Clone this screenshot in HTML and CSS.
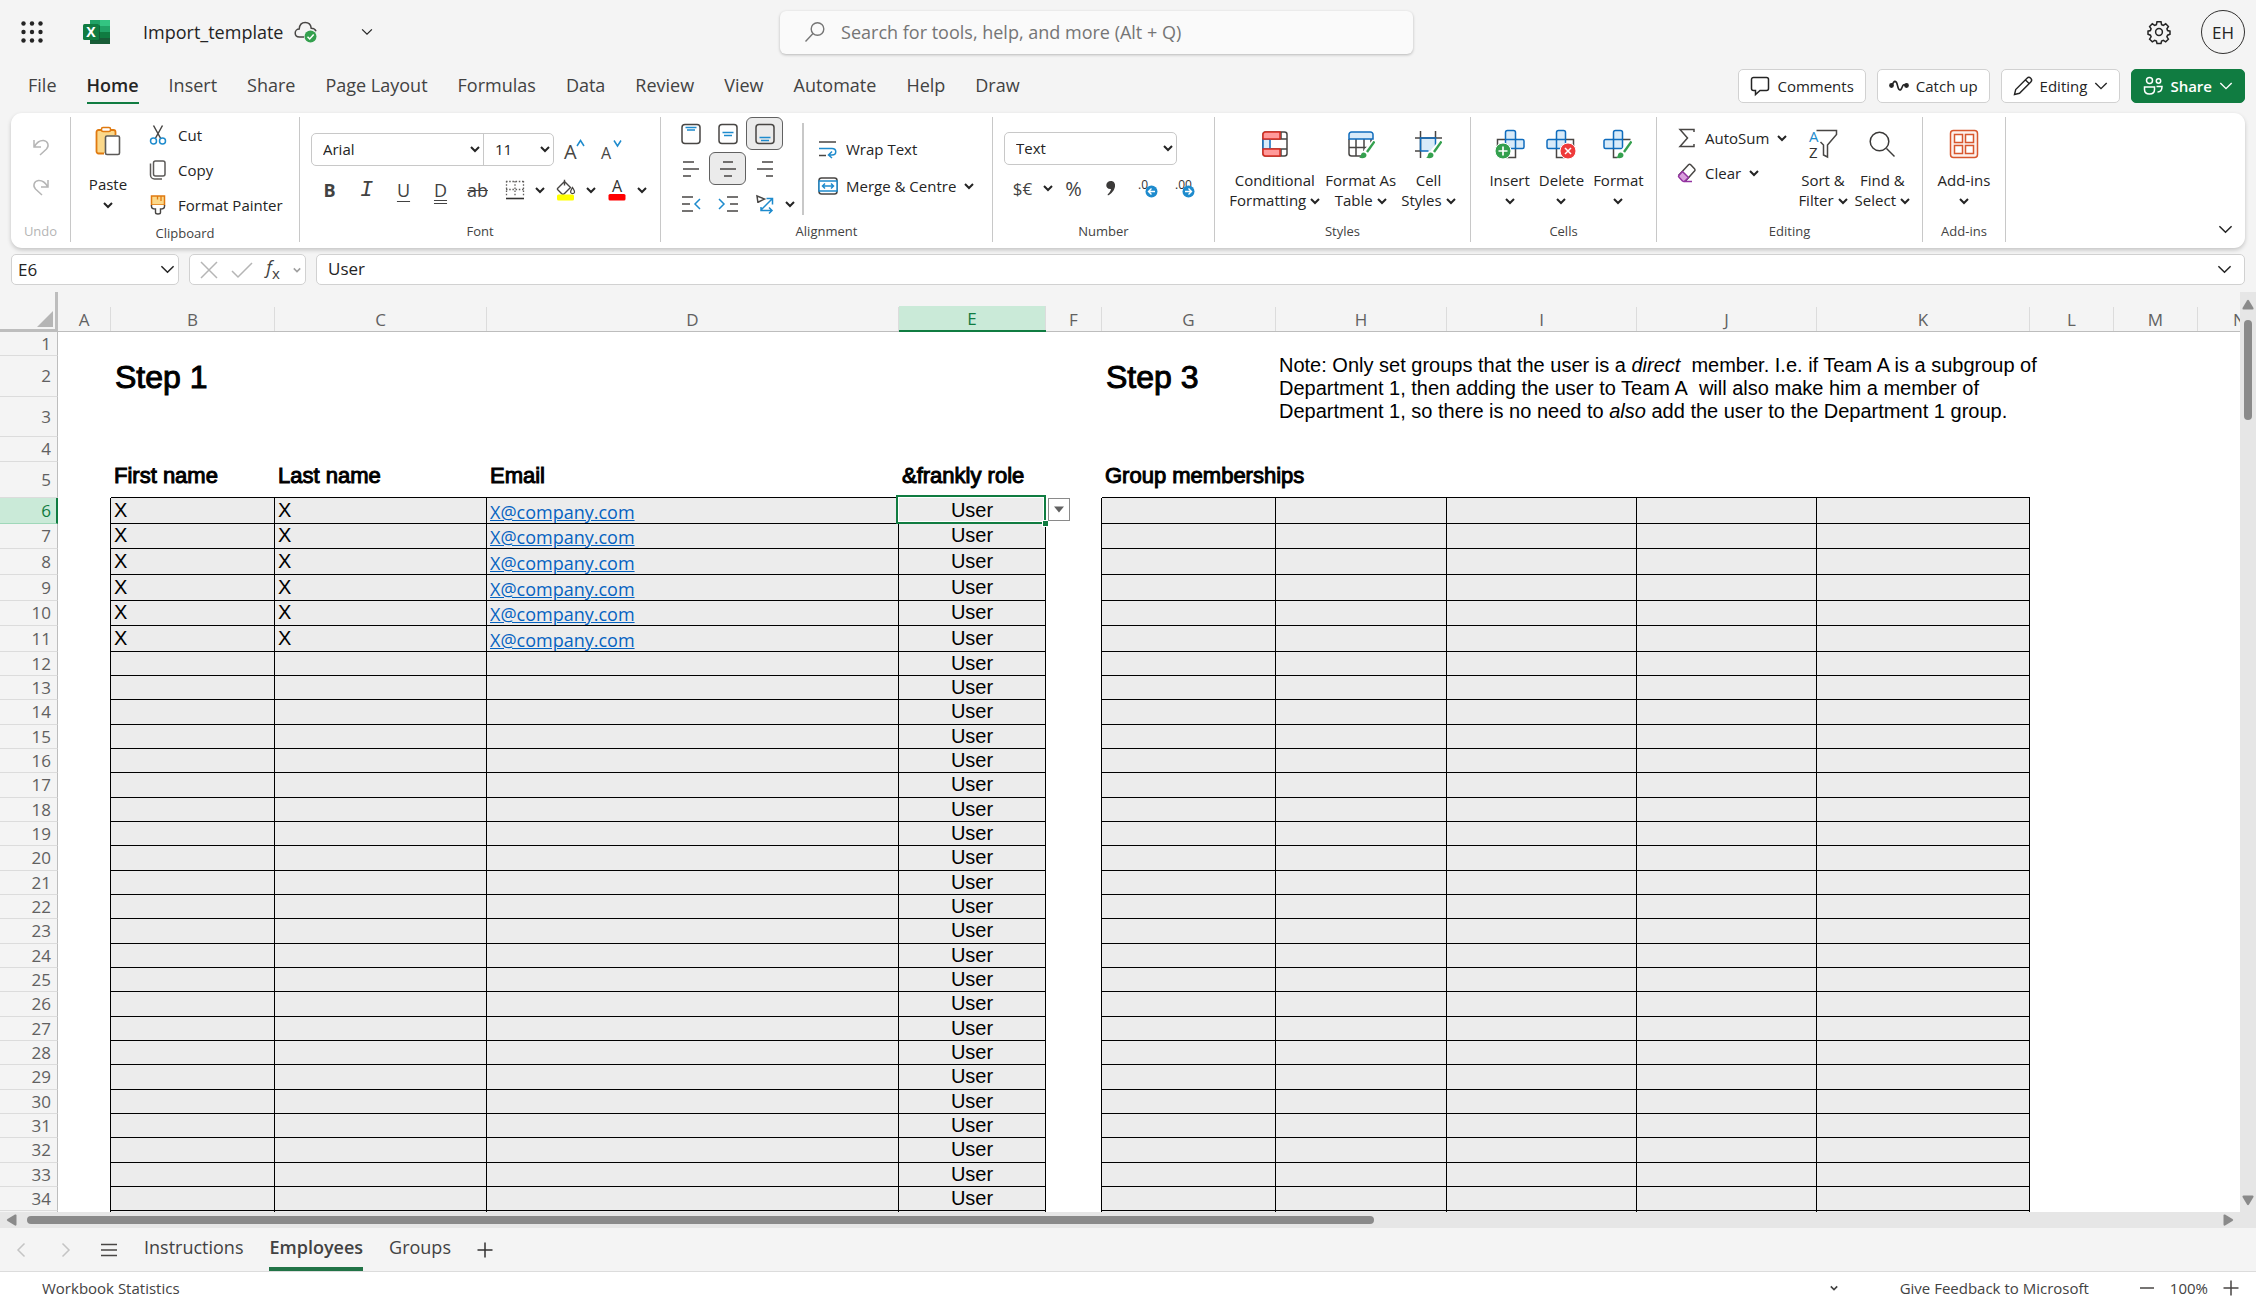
FILE: index.html
```html
<!DOCTYPE html>
<html lang="en">

  <head>
    <meta charset="UTF-8">
    <title>Import_template</title>
    <link rel="stylesheet" href="styles.css">
  </head>

  <body>
    <svg class="defs" aria-hidden="true">
      <symbol id="chev" viewBox="0 0 10 10"><path d="M1 3l4 4 4-4" fill="none" stroke="currentColor" stroke-width="2"/></symbol>
      <symbol id="chevWide" viewBox="0 0 16 16"><path d="M1.500 4.500L8 11l6.500-6.500" fill="none" stroke="currentColor" stroke-width="1.600"/></symbol>
      <symbol id="brush" viewBox="0 0 16 18"><path d="M15 1L6.500 11" stroke="#fff" stroke-width="5"/><path d="M15.500.5L8 11" stroke="#34a04e" stroke-width="2.400"/><path d="M0 16.500c2-.5 1.500-2.500 2.500-4 1.500-1.800 5-.8 5 1.800 0 3-4.500 3.700-7.500 2.200z" fill="#34a04e"/></symbol>
    </svg>

    <header class="topbar">
      <div class="docInfo">
	<button type="button" class="iconBtn waffle" aria-label="App launcher">
	  <svg width="24" height="24" viewBox="0 0 24 24" fill="#242424"><circle cx="3.500" cy="3.500" r="2.200"/><circle cx="12" cy="3.500" r="2.200"/><circle cx="20.500" cy="3.500" r="2.200"/><circle cx="3.500" cy="12" r="2.200"/><circle cx="12" cy="12" r="2.200"/><circle cx="20.500" cy="12" r="2.200"/><circle cx="3.500" cy="20.500" r="2.200"/><circle cx="12" cy="20.500" r="2.200"/><circle cx="20.500" cy="20.500" r="2.200"/></svg>
	</button>
	<svg class="appLogo" width="28" height="26" viewBox="0 0 28 26">
	  <path d="M7 1h10v6H7z" fill="#21a366"/><path d="M17 1h10v6H17z" fill="#33c481"/><path d="M7 7h10v6H7z" fill="#107c41"/><path d="M17 7h10v6H17z" fill="#21a366"/><path d="M7 13h10v6H7z" fill="#185c37"/><path d="M17 13h10v6H17z" fill="#107c41"/><path d="M7 19h20v6H7z" fill="#185c37"/>
	  <path d="M7 6h10v16H7z" fill="#0b5c30" opacity=".5"/>
	  <rect y="5" width="16" height="16" rx="1.500" fill="#107c41"/>
	  <text x="8" y="18" font-size="14" font-weight="700" text-anchor="middle" fill="#fff">X</text>
	</svg>
	<span class="docName">Import_template</span>
	<svg class="cloud" width="24" height="24" viewBox="0 0 24 24">
	  <path d="M10 17H5.500C3 17 1.200 15.300 1.200 13c0-2.200 1.800-4 4-4C5.500 5 8 2.500 11.200 2.500c3.300 0 5.600 2.300 6 5.700 2.400 0 4.200 1.200 4.800 3" fill="none" stroke="#484644" stroke-width="1.500"/>
	  <circle cx="16.500" cy="16.500" r="6" fill="#34a04e"/><path d="M13.500 16.800l2.200 2.200 4-4.600" fill="none" stroke="#fff" stroke-width="1.500"/>
	</svg>
	<button type="button" class="iconBtn" aria-label="File details"><svg width="12" height="12"><use href="#chevWide"/></svg></button>
      </div>
      <label class="search">
	<svg width="22" height="22" viewBox="0 0 22 22" fill="none" stroke="#757575" stroke-width="1.400"><circle cx="13.500" cy="8" r="6.300"/><path d="M9 12.500L1.500 20.500"/></svg>
	<input type="search" aria-label="Search" placeholder="Search for tools, help, and more (Alt + Q)">
      </label>
      <div class="account">
	<button type="button" class="iconBtn" aria-label="Settings">
	  <svg width="24" height="24" viewBox="0 0 24 24" fill="none" stroke="#242424" stroke-width="1.500"><path d="M10 1.800h4l.6 2.800 1.700.7 2.400-1.500 2.700 2.700-1.500 2.400.7 1.700 2.400.6v3l-2.400 1-.7 1.600 1.500 2.400-2.700 2.700-2.400-1.500-1.700.7-.6 2.400h-4l-.6-2.400-1.700-.7-2.400 1.500-2.700-2.700 1.500-2.400-.7-1.600-2.400-1v-3l2.400-.6.7-1.700-1.500-2.400 2.700-2.700 2.400 1.500 1.700-.7z"/><circle cx="12" cy="12" r="3.400"/></svg>
	</button>
	<button type="button" class="avatar">EH</button>
      </div>
    </header>

    <nav class="menubar">
      <div class="tabs">
	<a href="#file">File</a>
	<a href="#home" class="active">Home</a>
	<a href="#insert">Insert</a>
	<a href="#share">Share</a>
	<a href="#layout">Page Layout</a>
	<a href="#formulas">Formulas</a>
	<a href="#data">Data</a>
	<a href="#review">Review</a>
	<a href="#view">View</a>
	<a href="#automate">Automate</a>
	<a href="#help">Help</a>
	<a href="#draw">Draw</a>
      </div>
      <div class="actions">
	<button type="button"><svg width="20" height="20" viewBox="0 0 20 20" fill="none" stroke="#242424" stroke-width="1.500"><path d="M3.500 1.500h13a2 2 0 012 2v9a2 2 0 01-2 2H10l-4.500 4v-4h-2a2 2 0 01-2-2v-9a2 2 0 012-2z"/></svg>Comments</button>
	<button type="button"><svg width="20" height="20" viewBox="0 0 20 20" fill="none" stroke="#242424" stroke-width="1.600"><circle cx="2.500" cy="9.500" r="1.600" fill="#242424"/><circle cx="17.500" cy="9.500" r="1.600" fill="#242424"/><path d="M3 9.500c2-6 4.500-5 5.500 0s3 6 4.500 2 2-2.500 4-2"/></svg>Catch up</button>
	<button type="button"><svg width="20" height="20" viewBox="0 0 20 20" fill="none" stroke="#242424" stroke-width="1.400"><path d="M1.500 18.500l1.200-5L14 2.200a2.600 2.600 0 013.800 3.700L6.500 17.300zM12.500 4l3.600 3.500"/></svg>Editing<svg width="14" height="14"><use href="#chevWide"/></svg></button>
	<button type="button" class="primary"><svg width="20" height="20" viewBox="0 0 20 20" fill="none" stroke="#fff" stroke-width="1.500"><circle cx="6.500" cy="4.500" r="3"/><circle cx="15.500" cy="5" r="2.200"/><path d="M1.500 11h10v2.500c0 3-2 4.500-5 4.500s-5-1.500-5-4.500zM13.500 10.500H19c0 4-1.500 5.500-4.500 5.500"/></svg>Share<svg width="14" height="14"><use href="#chevWide"/></svg></button>
      </div>
    </nav>

    <section class="ribbon">
      <div class="group groupUndo">
	<div class="groupBody">
	  <button type="button" aria-label="Undo"><svg width="18" height="18" viewBox="0 0 18 18" fill="none" stroke="#b5b5b5" stroke-width="1.500"><path d="M2 2v7h7M2.500 8.500C5 4 8 2.300 11.500 2.500c4.500.5 6 5.500 3 8.500L8 17"/></svg></button>
	  <button type="button" aria-label="Redo"><svg width="18" height="18" viewBox="0 0 18 18" fill="none" stroke="#b5b5b5" stroke-width="1.500"><path d="M16 2v7H9M15.500 8.500C13 4 10 2.300 6.500 2.500 2 3 .5 8 3.500 11l6.500 6"/></svg></button>
	</div>
	<span class="groupLabel">Undo</span>
      </div>

      <div class="group groupClipboard">
	<div class="groupBody">
	  <button type="button" class="bigBtn paste">
	    <svg width="28" height="30" viewBox="0 0 28 30"><path d="M3 4h18v23H3z" fill="#fbd88a"/><path d="M10 27.500H4.500a2 2 0 01-2-2V6a2 2 0 012-2h15a2 2 0 012 2v3" fill="none" stroke="#e07a10" stroke-width="1.800"/><rect x="7.500" y="1.500" width="9" height="4" rx="1.500" fill="#fff" stroke="#e07a10" stroke-width="1.500"/><rect x="11.500" y="10" width="14" height="18.500" rx="1.500" fill="#fff" stroke="#5c5a58" stroke-width="1.600"/></svg>
	    <span class="solo">Paste<br><svg width="10" height="10"><use href="#chev"/></svg></span>
	  </button>
	  <div class="btnList">
	    <button type="button"><svg width="24" height="20" viewBox="0 0 24 20" fill="none" stroke-width="1.500"><path d="M7.500.5l7.200 13M16.500.5l-7.200 13" stroke="#484644"/><circle cx="7.500" cy="16" r="3" stroke="#1e8bcd"/><circle cx="16.500" cy="16" r="3" stroke="#1e8bcd"/></svg>Cut</button>
	    <button type="button"><svg width="24" height="20" viewBox="0 0 24 20" fill="none" stroke="#5c5a58" stroke-width="1.500"><rect x="7.500" y="1" width="11.500" height="15" rx="2"/><path d="M4.500 3.500V15a4 4 0 004 4h7.500"/></svg>Copy</button>
	    <button type="button"><svg width="24" height="20" viewBox="0 0 24 20"><path d="M5.500 1h13v9h-13z" fill="#fbd88a" stroke="#e07a10" stroke-width="1.500"/><path d="M11.500 1v3.500M15 1v5" stroke="#e07a10" stroke-width="1.300"/><path d="M5.500 10v1.500c0 2 1 2.500 4 2.500v3.500c0 2 5 2 5 0V14c3 0 4-.5 4-2.500V10" fill="#fff" stroke="#484644" stroke-width="1.400"/></svg>Format Painter</button>
	  </div>
	</div>
	<span class="groupLabel">Clipboard</span>
      </div>

      <div class="group groupFont">
	<div class="groupBody">
	  <div class="toolRow">
	    <div class="pickers">
	      <div class="picker fontPicker"><select aria-label="Font"><option>Arial</option></select><svg width="10" height="10"><use href="#chev"/></svg></div>
	      <div class="picker sizePicker"><select aria-label="Font size"><option>11</option></select><svg width="10" height="10"><use href="#chev"/></svg></div>
	    </div>
	    <button type="button" class="tool" aria-label="Increase font size"><svg width="22" height="22" viewBox="0 0 22 22"><text x="0" y="21" font-size="20" fill="#484644">A</text><path d="M13 8l3.500-5.500L20 8" fill="none" stroke="#1e8bcd" stroke-width="1.500"/></svg></button>
	    <button type="button" class="tool" aria-label="Decrease font size"><svg width="22" height="22" viewBox="0 0 22 22"><text x="0" y="21" font-size="16" fill="#484644">A</text><path d="M13 2.500L16.500 8 20 2.500" fill="none" stroke="#1e8bcd" stroke-width="1.500"/></svg></button>
	  </div>
	  <div class="toolRow">
	    <button type="button" class="tool bold">B</button>
	    <button type="button" class="tool italic">I</button>
	    <button type="button" class="tool underline">U</button>
	    <button type="button" class="tool double">D</button>
	    <button type="button" class="tool strike">ab</button>
	    <button type="button" class="tool" aria-label="Borders"><svg width="20" height="20" viewBox="0 0 20 20" fill="none" stroke="#605e5c"><path d="M1 1.500h18M1 9.500h18" stroke-dasharray="1.500 1.700" stroke-width="1.300"/><path d="M1.500 1v16M10 1v16M18.500 1v16" stroke-dasharray="1.500 1.700" stroke-width="1.300"/><path d="M1 18.500h18" stroke="#323130" stroke-width="1.600"/></svg></button>
	    <button type="button" class="drop" aria-label="More borders"><svg width="10" height="10"><use href="#chev"/></svg></button>
	    <button type="button" class="tool" aria-label="Fill colour"><svg width="20" height="22" viewBox="0 0 20 22"><path d="M1.500 9.500L8.500 2.500l6 6-6 6c-1 1-2 1-3 0l-4-4zM8.500 6.500V.8" fill="#fff" stroke="#484644" stroke-width="1.400"/><path d="M16.500 8.500c1.500 2.500 2.500 3.500 2 5-.8 1.500-3 1.500-3.800 0-.5-1.500.5-2.700 1.800-5z" fill="#fff" stroke="#484644" stroke-width="1.200"/><rect x="1" y="15.500" width="17" height="6" rx="1.500" fill="#ff0"/></svg></button>
	    <button type="button" class="drop" aria-label="More fill colours"><svg width="10" height="10"><use href="#chev"/></svg></button>
	    <button type="button" class="tool" aria-label="Font colour"><svg width="20" height="22" viewBox="0 0 20 22"><text x="10" y="13" font-size="16" text-anchor="middle" fill="#323130">A</text><rect x="1.500" y="15" width="17" height="6.500" rx="1.500" fill="#f00"/></svg></button>
	    <button type="button" class="drop" aria-label="More font colours"><svg width="10" height="10"><use href="#chev"/></svg></button>
	  </div>
	</div>
	<span class="groupLabel">Font</span>
      </div>

      <div class="group groupAlign">
	<div class="groupBody">
	  <div class="alignGrid">
	    <button type="button" aria-label="Top align"><svg width="20" height="22" viewBox="0 0 20 22" fill="none"><rect x="1" y="1.500" width="18" height="19" rx="3" stroke="#484644" stroke-width="1.500"/><path d="M4.500 4.500h11M6 7h8" stroke="#1e8bcd" stroke-width="1.500"/></svg></button>
	    <button type="button" aria-label="Middle align"><svg width="20" height="22" viewBox="0 0 20 22" fill="none"><rect x="1" y="1.500" width="18" height="19" rx="3" stroke="#484644" stroke-width="1.500"/><path d="M4.500 9.500h11M6 12.500h8" stroke="#1e8bcd" stroke-width="1.500"/></svg></button>
	    <button type="button" class="on" aria-label="Bottom align"><svg width="20" height="22" viewBox="0 0 20 22" fill="none"><rect x="1" y="1.500" width="18" height="19" rx="3" stroke="#484644" stroke-width="1.500"/><path d="M4.500 14.500h11M6 17.500h8" stroke="#1e8bcd" stroke-width="1.500"/></svg></button>
	    <span></span>
	    <button type="button" aria-label="Align left"><svg width="20" height="18" viewBox="0 0 20 18" stroke="#484644" stroke-width="1.500"><path d="M2 2h11M2 9h16M2 16h8"/></svg></button>
	    <button type="button" class="on" aria-label="Align centre"><svg width="20" height="18" viewBox="0 0 20 18" stroke="#484644" stroke-width="1.500"><path d="M5 2h10M2 9h16M6 16h8"/></svg></button>
	    <button type="button" aria-label="Align right"><svg width="20" height="18" viewBox="0 0 20 18" stroke="#484644" stroke-width="1.500"><path d="M7 2h11M2 9h16M11 16h7"/></svg></button>
	    <span></span>
	    <button type="button" aria-label="Decrease indent"><svg width="20" height="18" viewBox="0 0 20 18" fill="none" stroke-width="1.500"><path d="M1 2h11M1 9h8M1 16h11" stroke="#484644"/><path d="M19 4l-5 5 5 5" stroke="#1e8bcd"/></svg></button>
	    <button type="button" aria-label="Increase indent"><svg width="20" height="18" viewBox="0 0 20 18" fill="none" stroke-width="1.500"><path d="M9 2h11M12 9h8M9 16h11" stroke="#484644"/><path d="M1 4l5 5-5 5" stroke="#1e8bcd"/></svg></button>
	    <button type="button" aria-label="Orientation"><svg width="20" height="20" viewBox="0 0 20 20" fill="none" stroke-width="1.500"><path d="M3 9L2 2l7.500 3L3.500 8" stroke="#484644"/><path d="M6 16L17 5M11.500 4.500h6v6M6 13v3.500h11M14 13.500l3 3-3 3" stroke="#1e8bcd"/></svg></button>
	    <button type="button" class="drop" aria-label="More orientations"><svg width="10" height="10"><use href="#chev"/></svg></button>
	  </div>
	  <div class="btnList alignText">
	    <button type="button"><svg width="20" height="18" viewBox="0 0 20 18" fill="none" stroke-width="1.500"><path d="M1 2h17M1 15.500h7" stroke="#484644"/><path d="M1 8.500h13c5 0 5 6.500 0 6.500h-3M14 11.500L10.500 15l3.500 3" stroke="#1e8bcd"/></svg>Wrap Text</button>
	    <button type="button"><svg width="20" height="18" viewBox="0 0 20 18" fill="none" stroke-width="1.500"><rect x="1" y="1" width="18" height="16" rx="2.500" stroke="#484644"/><path d="M1 4h18v10H1z" fill="#fff" stroke="#1e8bcd"/><path d="M4.500 9h11M7 6.500L4.500 9 7 11.500M13 6.500L15.500 9 13 11.500" stroke="#1e8bcd"/></svg>Merge &amp; Centre<svg width="10" height="10"><use href="#chev"/></svg></button>
	  </div>
	</div>
	<span class="groupLabel">Alignment</span>
      </div>

      <div class="group groupNumber">
	<div class="groupBody">
	  <div class="toolRow">
	    <div class="pickers">
	      <div class="picker formatPicker"><select aria-label="Number format"><option>Text</option></select><svg width="10" height="10"><use href="#chev"/></svg></div>
	    </div>
	  </div>
	  <div class="toolRow">
	    <button type="button" class="tool currency">$€</button>
	    <button type="button" class="drop" aria-label="More currencies"><svg width="10" height="10"><use href="#chev"/></svg></button>
	    <button type="button" class="tool percent">%</button>
	    <button type="button" class="tool" aria-label="Comma style"><svg width="12" height="18" viewBox="0 0 12 18"><path d="M6 2c5.500 0 6 9-2 14-1.300.7-1.800-.2-1-1 1.500-1.300 2.600-3 3-5C-.5 10.500 0 2 6 2z" fill="#3b3a39"/></svg></button>
	    <button type="button" class="tool" aria-label="Increase decimal"><svg width="22" height="22" viewBox="0 0 22 22"><text x="1" y="12" font-size="12" fill="#323130">.0</text><circle cx="14.500" cy="14.500" r="6" fill="#1e8bcd"/><path d="M18 14.500h-6.500M14.500 11.500l-3 3 3 3" fill="none" stroke="#fff" stroke-width="1.400"/></svg></button>
	    <button type="button" class="tool" aria-label="Decrease decimal"><svg width="22" height="22" viewBox="0 0 22 22"><text x="1" y="12" font-size="12" fill="#323130">.00</text><circle cx="14.500" cy="14.500" r="6" fill="#1e8bcd"/><path d="M11 14.500h6.500M14.500 11.500l3 3-3 3" fill="none" stroke="#fff" stroke-width="1.400"/></svg></button>
	  </div>
	</div>
	<span class="groupLabel">Number</span>
      </div>

      <div class="group groupStyles">
	<div class="groupBody">
	  <button type="button" class="bigBtn">
	    <svg width="28" height="30" viewBox="0 0 28 30" fill="none" stroke-width="1.500"><rect x="2" y="3" width="24" height="24" rx="2.500" stroke="#484644"/><path d="M20 3v7M10 10h16M10 20h16M20 20v7" stroke="#484644"/><path d="M2 10h7v10H2z" fill="#d9ebf9" stroke="#0f6cbd"/><path d="M19 3H4.500A2.500 2.500 0 002 5.500V10h17zM19 27H4.500A2.500 2.500 0 012 24.500V20h17z" fill="#ff9a9a" stroke="#d92c20"/></svg>
	    <span>Conditional<br>Formatting<svg width="10" height="10"><use href="#chev"/></svg></span>
	  </button>
	  <button type="button" class="bigBtn">
	    <svg width="28" height="30" viewBox="0 0 28 30" fill="none" stroke-width="1.500"><path d="M2 10v14.500A2.500 2.500 0 004.500 27H14M24 10v6M9 10v17M17 10v12M2 18.500h18" stroke="#484644"/><path d="M4.500 3h19A2.500 2.500 0 0126 5.500V10H2V5.500A2.500 2.500 0 014.500 3z" fill="#d9ebf9" stroke="#0f6cbd"/><use href="#brush" x="12" y="12" width="16" height="18"/></svg>
	    <span>Format As<br>Table<svg width="10" height="10"><use href="#chev"/></svg></span>
	  </button>
	  <button type="button" class="bigBtn">
	    <svg width="28" height="30" viewBox="0 0 28 30" fill="none" stroke-width="1.500"><path d="M6.500 9h15v13h-15z" fill="#d9ebf9"/><path d="M6.500 2v27M21.500 2v7M1 9h27M1 22h6" stroke="#484644"/><path d="M6.500 22V9h15v8M6.500 22h8" stroke="#0f6cbd"/><use href="#brush" x="12" y="12" width="16" height="18"/></svg>
	    <span>Cell<br>Styles<svg width="10" height="10"><use href="#chev"/></svg></span>
	  </button>
	</div>
	<span class="groupLabel">Styles</span>
      </div>

      <div class="group groupCells">
	<div class="groupBody">
	  <button type="button" class="bigBtn">
	    <svg width="30" height="30" viewBox="0 0 30 30"><path d="M2.500 20v-9.500h8M20.500 20v8.500h-9" fill="none" stroke="#484644" stroke-width="1.500"/><path d="M10.500 3.500a2 2 0 012-2h6a2 2 0 012 2v7h7a1.500 1.500 0 011.500 1.500v6a1.500 1.500 0 01-1.500 1.500h-17z" fill="#d9ebf9" stroke="#0f6cbd" stroke-width="1.500"/><path d="M10.500 10.500h10v9" fill="none" stroke="#0f6cbd" stroke-width="1.500"/><circle cx="8" cy="22" r="8" fill="#34a04e" stroke="#fff"/><path d="M8 17.500v9M3.500 22h9" stroke="#fff" stroke-width="1.700"/></svg>
	    <span class="solo">Insert<br><svg width="10" height="10"><use href="#chev"/></svg></span>
	  </button>
	  <button type="button" class="bigBtn">
	    <svg width="30" height="30" viewBox="0 0 30 30"><path d="M27.500 20v-9.500h-8M10.500 19.500v9h8" fill="none" stroke="#484644" stroke-width="1.500"/><path d="M10.500 10.500v-7a2 2 0 012-2h5a2 2 0 012 2v16h-17A1.500 1.500 0 011 18v-6a1.500 1.500 0 011.500-1.500z" fill="#d9ebf9" stroke="#0f6cbd" stroke-width="1.500"/><path d="M10.500 19.500v-9h9" fill="none" stroke="#0f6cbd" stroke-width="1.500"/><circle cx="22" cy="22" r="8" fill="#ee3b3b" stroke="#fff"/><path d="M19 19l6 6M25 19l-6 6" stroke="#fff" stroke-width="1.500"/></svg>
	    <span class="solo">Delete<br><svg width="10" height="10"><use href="#chev"/></svg></span>
	  </button>
	  <button type="button" class="bigBtn">
	    <svg width="30" height="30" viewBox="0 0 30 30"><path d="M19.500 10.500h8M10.500 19.500v9h4" fill="none" stroke="#484644" stroke-width="1.500"/><path d="M10.500 10.500v-7a2 2 0 012-2h5a2 2 0 012 2v16h-17A1.500 1.500 0 011 18v-6a1.500 1.500 0 011.500-1.500z" fill="#d9ebf9" stroke="#0f6cbd" stroke-width="1.500"/><path d="M10.500 19.500v-9h9" fill="none" stroke="#0f6cbd" stroke-width="1.500"/><use href="#brush" x="13" y="12" width="16" height="18"/></svg>
	    <span class="solo">Format<br><svg width="10" height="10"><use href="#chev"/></svg></span>
	  </button>
	</div>
	<span class="groupLabel">Cells</span>
      </div>

      <div class="group groupEditing">
	<div class="groupBody">
	  <div class="btnList">
	    <button type="button"><svg width="20" height="20" viewBox="0 0 20 20" fill="none" stroke="#484644" stroke-width="1.500"><path d="M17 4V1.500H3L10.500 10 3 18.500h14V16"/></svg>AutoSum<svg width="10" height="10"><use href="#chev"/></svg></button>
	    <button type="button"><svg width="20" height="20" viewBox="0 0 20 20" stroke-width="1.500"><path d="M2 12L11.500 1.800a1.500 1.500 0 012.200 0l3.800 4a1.500 1.500 0 010 2.200L9 17.500z" fill="#fff" stroke="#484644"/><path d="M5.500 8.500L2 12.200a1.500 1.500 0 000 2.100l3.500 3.700c.6.500 2 .5 2.500 0l3.500-3.500z" fill="#d9a0dd" stroke="#9332a0"/><path d="M7 18.500h8" stroke="#9332a0"/></svg>Clear<svg width="10" height="10"><use href="#chev"/></svg></button>
	  </div>
	  <button type="button" class="bigBtn">
	    <svg width="30" height="30" viewBox="0 0 30 30"><text x="1" y="13" font-size="15" fill="#1e8bcd">A</text><text x="1" y="29" font-size="15" fill="#323130">Z</text><path d="M8.500 1.500h20v4L19.500 16v12l-4-2V16l-3-3" fill="none" stroke="#484644" stroke-width="1.500"/></svg>
	    <span>Sort &amp;<br>Filter<svg width="10" height="10"><use href="#chev"/></svg></span>
	  </button>
	  <button type="button" class="bigBtn">
	    <svg width="28" height="30" viewBox="0 0 28 30" fill="none" stroke="#3b3a39" stroke-width="1.500"><circle cx="11.500" cy="12.500" r="9.300"/><path d="M18.500 19.500l8 8"/></svg>
	    <span>Find &amp;<br>Select<svg width="10" height="10"><use href="#chev"/></svg></span>
	  </button>
	</div>
	<span class="groupLabel">Editing</span>
      </div>

      <div class="group groupAddins">
	<div class="groupBody">
	  <button type="button" class="bigBtn">
	    <svg width="30" height="30" viewBox="0 0 30 30" fill="none" stroke="#d8572e" stroke-width="1.500"><rect x="1.500" y="1.500" width="27" height="27" rx="3" fill="#fdf1ec"/><path d="M5.500 5.500h8v8h-8zM16.500 5.500h8v8h-8zM5.500 16.500h8v8h-8zM16.500 16.500h8v8h-8z" fill="#fff"/></svg>
	    <span class="solo">Add-ins<br><svg width="10" height="10"><use href="#chev"/></svg></span>
	  </button>
	</div>
	<span class="groupLabel">Add-ins</span>
      </div>
      <button type="button" class="collapse" aria-label="Ribbon display options"><svg width="15" height="15"><use href="#chevWide"/></svg></button>
    </section>

    <section class="formulaBar">
      <div class="nameBox">
	<input type="text" aria-label="Name box" value="E6">
	<svg width="15" height="15"><use href="#chevWide"/></svg>
      </div>
      <div class="formulaTools">
	<button type="button" aria-label="Cancel"><svg width="18" height="18" viewBox="0 0 18 18" stroke="#b5b5b5" stroke-width="1.500"><path d="M1 1l16 16M17 1L1 17"/></svg></button>
	<button type="button" aria-label="Enter"><svg width="22" height="18" viewBox="0 0 22 18" fill="none" stroke="#b5b5b5" stroke-width="1.500"><path d="M1 10l6 6L21 2"/></svg></button>
	<button type="button" class="fx"><i>f</i><sub>x</sub></button>
	<svg width="8" height="8"><use href="#chev"/></svg>
      </div>
      <div class="formulaInput">
	<input type="text" aria-label="Formula" value="User">
	<svg width="15" height="15"><use href="#chevWide"/></svg>
      </div>
    </section>

    <main class="sheetArea">
      <div class="sheet">
	<table class="cells">
	  <colgroup id="cols"></colgroup>
	  <thead><tr id="colHeads"></tr></thead>
	  <tbody id="rows"></tbody>
	</table>
      </div>
      <div class="vScroll">
	<svg width="12" height="11" viewBox="0 0 12 11"><path d="M5 1.500Q6 0 7 1.500L11.500 9q.5 1.500-1 1.500h-9Q0 10.500.5 9z" fill="#8a8a8a"/></svg>
	<div class="vThumb"></div>
	<svg width="12" height="11" viewBox="0 0 12 11"><path d="M5 9.500Q6 11 7 9.500L11.500 2Q12 .5 10.500.5h-9Q0 .5.500 2z" fill="#8a8a8a"/></svg>
      </div>
      <div class="hScroll">
	<svg width="11" height="12" viewBox="0 0 11 12"><path d="M1.500 5Q0 6 1.500 7L9 11.500q1.500.5 1.500-1v-9Q10.500 0 9 .5z" fill="#8a8a8a"/></svg>
	<div class="hTrack"><div class="hThumb"></div></div>
	<svg width="11" height="12" viewBox="0 0 11 12"><path d="M9.500 5Q11 6 9.500 7L2 11.500q-1.500.5-1.500-1v-9Q.500 0 2 .5z" fill="#8a8a8a"/></svg>
      </div>
    </main>

    <nav class="sheetTabs">
      <button type="button" aria-label="Previous sheet"><svg width="10" height="16" viewBox="0 0 10 16" fill="none" stroke="#c4c4c4" stroke-width="1.500"><path d="M8.500 1.500L2 8l6.500 6.500"/></svg></button>
      <button type="button" aria-label="Next sheet"><svg width="10" height="16" viewBox="0 0 10 16" fill="none" stroke="#c4c4c4" stroke-width="1.500"><path d="M1.500 1.500L8 8l-6.500 6.500"/></svg></button>
      <button type="button" class="allSheets" aria-label="All sheets"><svg width="18" height="16" viewBox="0 0 18 16" stroke="#484644" stroke-width="1.600"><path d="M1 2.500h16M1 8h16M1 13.500h16"/></svg></button>
      <a href="#instructions">Instructions</a>
      <a href="#employees" class="active">Employees</a>
      <a href="#groups">Groups</a>
      <button type="button" class="newSheet" aria-label="New sheet"><svg width="16" height="16" viewBox="0 0 16 16" stroke="#323130" stroke-width="1.500"><path d="M8 .5v15M.5 8h15"/></svg></button>
    </nav>

    <footer class="status">
      <a href="#stats">Workbook Statistics</a>
      <button type="button" class="statusMore" aria-label="More"><svg width="8" height="8"><use href="#chev"/></svg></button>
      <a href="#feedback">Give Feedback to Microsoft</a>
      <div class="zoom">
	<button type="button" aria-label="Zoom out"><svg width="16" height="16" viewBox="0 0 16 16" stroke="#484644" stroke-width="1.500"><path d="M1 8h14"/></svg></button>
	<span>100%</span>
	<button type="button" aria-label="Zoom in"><svg width="16" height="16" viewBox="0 0 16 16" stroke="#484644" stroke-width="1.500"><path d="M8 .5v15M.5 8h15"/></svg></button>
      </div>
    </footer>
    <script src="sheet.js"></script>
  </body>

</html>
```

FILE: styles.css
```css
* {
    box-sizing: border-box;
}
body {
    margin: 0;
    height: 100vh;
    display: flex;
    flex-direction: column;
    overflow: hidden;
    background-color: #f4f4f4;
    color: #242424;
    font-family: "Open Sans", "Noto Sans", sans-serif;
    font-size: 15px;
}
button, input, select {
    font: inherit;
    color: inherit;
    margin: 0;
    padding: 0;
    border: none;
    background: none;
    outline: none;
}
a {
    color: inherit;
    text-decoration: none;
}
svg {
    display: block;
    flex: none;
    overflow: visible;
}
.defs {
    position: absolute;
    width: 0;
    height: 0;
}

/* title bar */
.topbar {
    display: grid;
    grid-template-columns: 37fr 30fr 40fr;
    align-items: center;
    height: 64px;
}
.docInfo {
    display: flex;
    align-items: center;
    padding-left: 20px;
    font-size: 18px;
}
.appLogo {
    margin-left: 39px;
}
.docName {
    margin-left: 32px;
}
.cloud {
    margin: 0 43px 0 11px;
}
.search {
    display: flex;
    align-items: center;
    gap: 15px;
    height: 43px;
    padding: 0 24px;
    border-radius: 6px;
    background-color: #fafafa;
    box-shadow: 0 1px 3px rgba(0,0,0,0.25);
}
.search input {
    flex: 1;
    font-size: 18px;
}
.search input::placeholder {
    color: #757575;
    opacity: 1;
}
.account {
    display: flex;
    justify-content: flex-end;
    align-items: center;
    gap: 30px;
    padding-right: 11px;
}
.avatar {
    width: 44px;
    height: 44px;
    border: 1px solid #323130;
    border-radius: 50%;
    font-size: 17px;
}

/* ribbon tabs */
.menubar {
    display: flex;
    justify-content: space-between;
    align-items: flex-start;
    height: 49px;
    padding: 5px 11px 0 28px;
}
.tabs {
    display: flex;
    gap: 30px;
    font-size: 18px;
    line-height: 33px;
    color: #424242;
}
.tabs a {
    border-bottom: 2px solid transparent;
}
.tabs .active {
    color: #242424;
    font-weight: 600;
    border-color: #107c41;
}
.actions {
    display: flex;
    gap: 11px;
}
.actions button {
    display: flex;
    align-items: center;
    gap: 7px;
    height: 34px;
    padding: 0 11px;
    border: 1px solid #d1d1d1;
    border-radius: 5px;
    background-color: #fff;
}
.actions .primary {
    border-color: #107c41;
    background-color: #107c41;
    color: #fff;
    font-weight: 600;
}

/* ribbon */
.ribbon {
    display: flex;
    margin: 0 11px;
    padding: 4px 0 6px;
    border-radius: 11px;
    background-color: #fff;
    box-shadow: 0 2px 4px rgba(0,0,0,0.2);
}
.group {
    display: flex;
    flex-direction: column;
    justify-content: space-between;
    height: 125px;
    border-right: 1px solid #c8c8c8;
}
.groupBody {
    display: flex;
}
.groupLabel {
    font-size: 13px;
    line-height: 22px;
    text-align: center;
    color: #424242;
}
.groupUndo {
    width: 60px;
}
.groupUndo .groupBody {
    flex-direction: column;
    align-items: center;
    padding-top: 10px;
}
.groupUndo button {
    height: 40px;
}
.groupUndo .groupLabel {
    color: #b5b5b5;
}
.groupClipboard {
    width: 229px;
}
.groupClipboard .groupBody {
    gap: 10px;
    padding-left: 9px;
}
.groupFont {
    width: 361px;
}
.groupFont .groupBody, .groupNumber .groupBody {
    flex-direction: column;
    gap: 5px;
    padding: 14px 0 0 11px;
}
.groupAlign {
    width: 332px;
}
.groupAlign .groupBody {
    padding-left: 11px;
}
.groupNumber {
    width: 222px;
}
.groupStyles {
    width: 256px;
}
.groupStyles .groupBody, .groupCells .groupBody, .groupAddins .groupBody {
    justify-content: center;
    gap: 5px;
    padding-top: 12px;
}
.groupCells {
    width: 186px;
}
.groupCells .groupBody {
    gap: 9px;
    padding-left: 6px;
}
.groupEditing {
    width: 266px;
}
.groupEditing .groupBody {
    gap: 7px;
    padding-left: 20px;
}
.groupEditing .btnList {
    padding-top: 3px;
    margin-right: 4px;
}
.groupEditing .bigBtn {
    padding-top: 12px;
}
.groupAddins {
    width: 83px;
}
.bigBtn {
    display: flex;
    flex-direction: column;
    align-items: center;
    gap: 11px;
    line-height: 20px;
}
.bigBtn span svg {
    display: inline-block;
    margin-left: 4px;
}
.bigBtn .solo svg {
    margin-left: 0;
}
.paste {
    width: 56px;
    gap: 18px;
    padding-top: 9px;
}
.btnList {
    display: flex;
    flex-direction: column;
    align-items: flex-start;
}
.btnList button {
    display: flex;
    align-items: center;
    gap: 8px;
    height: 35px;
}
.toolRow {
    display: flex;
    align-items: center;
    min-height: 34px;
}
.tool {
    display: flex;
    justify-content: center;
    align-items: center;
    width: 37px;
    height: 36px;
    font-size: 18px;
    color: #424242;
}
.drop {
    display: flex;
    justify-content: center;
    align-items: center;
    width: 14px;
    height: 36px;
}
.bold {
    font-weight: 700;
}
.italic {
    font-family: "Liberation Mono", monospace;
    font-size: 22px;
    font-style: italic;
}
.underline {
    text-decoration: underline;
    text-underline-offset: 4px;
}
.double {
    text-decoration: underline double;
    text-underline-offset: 3px;
}
.strike {
    text-decoration: line-through;
}
.currency {
    font-size: 17px;
}
.percent {
    font-size: 20px;
}
.pickers {
    display: flex;
    height: 33px;
    margin-right: 2px;
    border: 1px solid #c8c8c8;
    border-radius: 5px;
}
.picker {
    display: grid;
    align-items: center;
}
.picker select, .picker svg {
    grid-area: 1 / 1;
}
.picker select {
    appearance: none;
    height: 31px;
    padding-left: 11px;
}
.picker svg {
    justify-self: end;
    margin-right: 3px;
    pointer-events: none;
}
.fontPicker {
    width: 171px;
}
.sizePicker {
    width: 70px;
    border-left: 1px solid #c8c8c8;
}
.formatPicker {
    width: 171px;
}
.alignGrid {
    display: grid;
    grid-template-columns: 37px 37px 37px 19px;
    grid-auto-rows: 33px;
    row-gap: 2px;
}
.alignGrid button {
    display: flex;
    justify-content: center;
    align-items: center;
    height: 33px;
}
.alignGrid .on {
    border: 1px solid #616161;
    border-radius: 6px;
    background-color: #ebebeb;
}
.alignText {
    height: 92px;
    margin-top: 6px;
    padding: 8px 0 0 14px;
    border-left: 2px solid #c8c8c8;
    gap: 2px;
}
.collapse {
    align-self: flex-end;
    margin: 0 12px 5px auto;
}

/* formula bar */
.formulaBar {
    display: flex;
    gap: 10px;
    margin: 6px 11px 7px;
}
.formulaBar > div {
    display: flex;
    align-items: center;
    height: 31px;
    border: 1px solid #d1d1d1;
    border-radius: 5px;
    background-color: #fff;
}
.formulaBar input {
    flex: 1;
    min-width: 0;
    font-size: 17px;
}
.nameBox {
    width: 168px;
    padding: 0 3px 0 6px;
}
.formulaTools {
    width: 117px;
    padding: 0 4px 0 10px;
    justify-content: space-between;
    color: #a0a0a0;
}
.fx {
    font-size: 18px;
    line-height: 20px;
    color: #424242;
}
.formulaInput {
    flex: 1;
    padding: 0 12px 0 11px;
}
.formulaInput input {
    padding-bottom: 2px;
}

/* sheet */
.sheetArea {
    flex: 1;
    min-height: 0;
    display: grid;
    grid-template-columns: minmax(0, 1fr) 16px;
    grid-template-rows: minmax(0, 1fr) 16px;
    background-color: #e6e6e6;
}
.sheet {
    overflow: hidden;
    background-color: #fff;
}
.cells {
    table-layout: fixed;
    width: 2282px;
    border-spacing: 0;
    font-family: "Liberation Sans", Arial, sans-serif;
    font-size: 20px;
    line-height: 20px;
    color: #000;
    white-space: nowrap;
}
.cells th, .cells td {
    padding: 0;
}
.cells th {
    background-color: #f4f4f4;
    color: #616161;
    font-family: "Open Sans", "Noto Sans", sans-serif;
    font-size: 17px;
    font-weight: 400;
}
.cells thead th {
    height: 40px;
    border-bottom: 1px solid #bdbdbd;
    vertical-align: bottom;
}
.cells thead span {
    display: block;
    height: 24px;
    line-height: 26px;
    border-right: 1px solid #dcdcdc;
}
.cells thead .corner {
    border-right: 3px solid #bdbdbd;
    border-bottom: 3px solid #bdbdbd;
}
.corner svg {
    margin: 0 2px 2px auto;
}
.cells thead .current {
    border-bottom: 2px solid #107c41;
}
.cells thead .current span {
    background-color: #caead8;
    color: #107c41;
}
.cells tbody th {
    padding-right: 6px;
    text-align: right;
    border-right: 1px solid #bdbdbd;
    border-bottom: 1px solid #dcdcdc;
}
.cells tbody .current {
    padding-right: 5px;
    background-color: #caead8;
    color: #107c41;
    border-right: 2px solid #107c41;
    border-bottom-color: #9fd8b9;
}
.cells td {
    padding-left: 3px;
}
.cells .edgeRight {
    border-right: 1px solid #000;
}
.cells .edgeBottom {
    border-bottom: 1px solid #000;
}
.cells .entry {
    padding-bottom: 2px;
    border-right: 1px solid #000;
    border-bottom: 1px solid #000;
    background-color: #ececec;
}
.cells .email {
    padding-bottom: 0;
    vertical-align: bottom;
    font-family: "Open Sans", "Noto Sans", sans-serif;
    font-size: 18px;
    line-height: 22px;
    color: #0563c1;
}
.email a {
    text-decoration: underline;
}
.cells .role {
    padding-left: 0;
    text-align: center;
}
.cells .step {
    padding-left: 4px;
    font-size: 32px;
    line-height: 36px;
    -webkit-text-stroke: 1px #000;
}
.cells .heading {
    padding-bottom: 8px;
    font-size: 22px;
    line-height: 22px;
    -webkit-text-stroke: 1px #000;
}
.cells .note {
    padding-top: 22px;
    vertical-align: top;
    line-height: 23px;
}
.selected {
    position: relative;
}
.selection {
    position: absolute;
    top: -3px;
    left: -3px;
    right: -1px;
    bottom: -1px;
    border: 2px solid #107c41;
    box-shadow: inset 0 0 0 1px #fff;
}
.fillHandle {
    position: absolute;
    right: -4px;
    bottom: -4px;
    width: 7px;
    height: 7px;
    border: 1px solid #fff;
    background-color: #107c41;
}
.listBtn {
    position: absolute;
    top: 0;
    left: 100%;
    display: flex;
    justify-content: center;
    align-items: center;
    width: 22px;
    height: 23px;
    margin-left: 3px;
    border: 1px solid #8a8a8a;
    background-color: #fff;
}
.vScroll {
    display: flex;
    flex-direction: column;
    align-items: center;
    padding: 7px 0 6px;
}
.vThumb {
    width: 8px;
    height: 100px;
    margin: 10px 0 auto;
    border-radius: 4px;
    background-color: #8a8a8a;
}
.hScroll {
    grid-column: 1 / 3;
    display: flex;
    align-items: center;
    gap: 10px;
    padding: 0 22px 0 6px;
}
.hTrack {
    flex: 1;
}
.hThumb {
    width: 61.6%;
    height: 8px;
    border-radius: 4px;
    background-color: #8a8a8a;
}

/* sheet tabs and status bar */
.sheetTabs {
    display: flex;
    align-items: center;
    gap: 26px;
    height: 44px;
    padding-left: 16px;
    border-bottom: 1px solid #dcdcdc;
    font-size: 18px;
    color: #424242;
}
.sheetTabs button + button {
    margin-left: 9px;
}
.sheetTabs .allSheets {
    margin: 0 0 0 3px;
}
.sheetTabs a {
    line-height: 39px;
    border-bottom: 4px solid transparent;
}
.sheetTabs .active {
    font-weight: 600;
    border-color: #217346;
}
.status {
    display: flex;
    align-items: center;
    height: 30px;
    padding: 2px 17px 0 42px;
    background-color: #fff;
    color: #424242;
}
.statusMore {
    margin: 0 62px 0 auto;
}
.zoom {
    display: flex;
    align-items: center;
    gap: 15px;
    margin-left: 50px;
}
```

FILE: sheet.js
```js
var columns = [
  ["A", 53], ["B", 164], ["C", 212], ["D", 412], ["E", 147], ["F", 56],
  ["G", 174], ["H", 171], ["I", 190], ["J", 180], ["K", 213],
  ["L", 84], ["M", 84], ["N", 84]
];
var heights = [24, 41, 40, 25, 36, 26, 25, 26, 26, 25, 26];
var entryCols = "BCDEGHIJK";
var note = "Note: Only set groups that the user is a <i>direct</i>&nbsp; member. I.e. if Team A is a subgroup of<br>" +
    "Department 1, then adding the user to Team A&nbsp; will also make him a member of<br>" +
    "Department 1, so there is no need to <i>also</i> add the user to the Department 1 group.";
var fixed = {
  B2: ["step", "Step 1"],
  G2: ["step", "Step 3"],
  B5: ["heading", "First name"],
  C5: ["heading", "Last name"],
  D5: ["heading", "Email"],
  E5: ["heading", "&amp;frankly role"],
  G5: ["heading", "Group memberships"]
};

function rowHeight(r) {
  if (r <= heights.length) return heights[r - 1];
  return r % 3 == 2 ? 25 : 24;
}

function cell(col, r) {
  var cls = [], html = "";
  if (col == "H" && r == 1)
    return '<td class="note" colspan="4" rowspan="4">' + note + "</td>";
  if (r <= 4 && "HIJK".indexOf(col) >= 0) return "";
  if (fixed[col + r]) {
    cls.push(fixed[col + r][0]);
    html = fixed[col + r][1];
  }
  var isEntry = entryCols.indexOf(col) >= 0;
  if (r == 5 && isEntry) cls.push("edgeBottom");
  if (r > 5) {
    if (isEntry) cls.push("entry");
    if (col == "A" || col == "F") cls.push("edgeRight");
    if (r <= 11 && (col == "B" || col == "C")) html = "X";
    if (r <= 11 && col == "D") {
      cls.push("email");
      html = '<a href="mailto:X@company.com">X@company.com</a>';
    }
    if (col == "E") {
      cls.push("role");
      html = "User";
    }
    if (col == "E" && r == 6) {
      cls.push("selected");
      html += '<div class="selection"></div><div class="fillHandle"></div>' +
        '<button type="button" class="listBtn" aria-label="Choose role">' +
        '<svg width="10" height="7"><path d="M0 .5h10L5 6.500z" fill="#616161"/></svg></button>';
    }
  }
  return '<td class="' + cls.join(" ") + '">' + html + "</td>";
}

var cols = '<col style="width:58px">';
var heads = '<th class="corner"><svg width="16" height="16"><path d="M16 0v16H0z" fill="#b5b5b5"/></svg></th>';
columns.forEach(function(c) {
  cols += '<col style="width:' + c[1] + 'px">';
  heads += "<th" + (c[0] == "E" ? ' class="current"' : "") + "><span>" + c[0] + "</span></th>";
});
document.getElementById("cols").innerHTML = cols;
document.getElementById("colHeads").innerHTML = heads;

var body = "";
for (var r = 1; r <= 35; r++) {
  body += '<tr style="height:' + rowHeight(r) + 'px"><th' + (r == 6 ? ' class="current"' : "") + ">" + r + "</th>";
  columns.forEach(function(c) { body += cell(c[0], r); });
  body += "</tr>";
}
document.getElementById("rows").innerHTML = body;
```
